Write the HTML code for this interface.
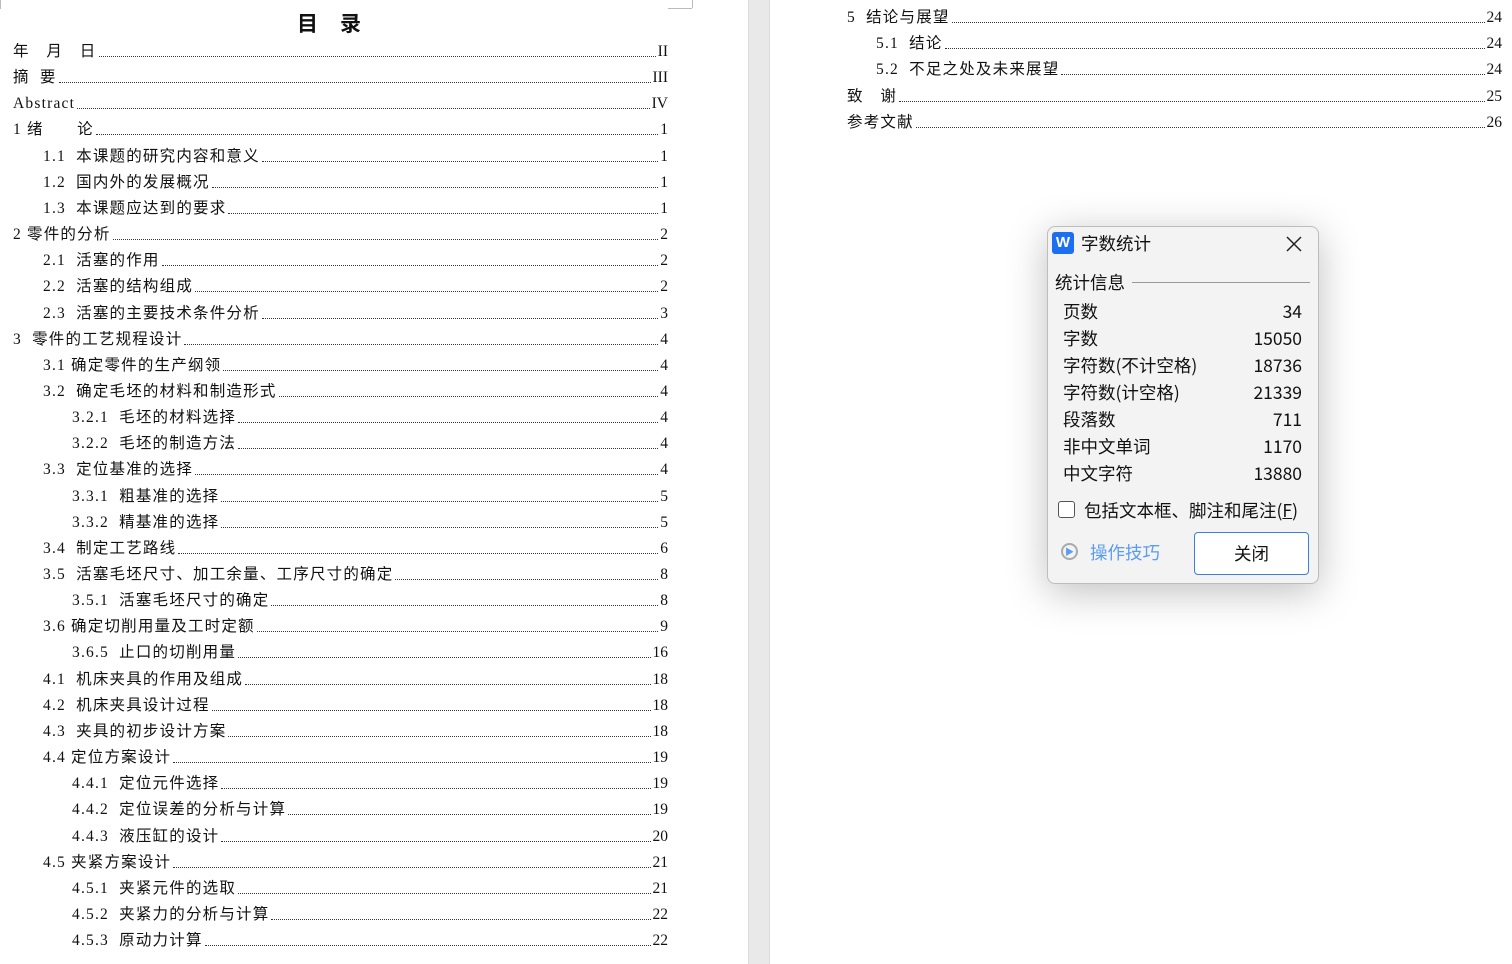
<!DOCTYPE html>
<html><head><meta charset="utf-8"><style>
body{margin:0;width:1512px;height:964px;position:relative;overflow:hidden;background:#fff;font-family:"Liberation Serif","Noto Sans CJK SC",serif;color:#111}
.gap{position:absolute;left:748px;top:0;width:20px;height:964px;background:#e9e9e9;border-left:1px solid #ddd;border-right:1px solid #ddd}
.r{position:absolute;height:20px;display:flex;align-items:flex-end;font-size:15.5px;line-height:20px;white-space:pre}
.r .a{letter-spacing:1.2px}
.r .d{flex:1;border-bottom:1px dotted #333;margin:0 2px 5px}
.t{position:absolute;left:0;width:680px;top:8px;text-align:center;font-size:21px;font-weight:bold;letter-spacing:22px;font-family:"Noto Sans CJK SC",sans-serif}
.mk{position:absolute;border-color:#bbb;border-style:solid;width:24px;height:8px}
.dlg{position:absolute;left:1047px;top:226px;width:270px;height:356px;background:#f3f3f3;border:1px solid #bdbdbd;border-radius:8px;box-shadow:0 8px 40px rgba(0,0,0,.25);font-family:"Noto Sans CJK SC",sans-serif;color:#111}
.dlg .row{position:absolute;left:15px;right:16px;display:flex;justify-content:space-between;font-size:17.5px;line-height:24px}
</style></head><body>
<div class="gap"></div>
<div class="mk" style="left:0;top:0;border-width:0 1px 1px 0;width:0"></div>
<div class="mk" style="left:668px;top:0;border-width:0 0 1px 0"></div>
<div class="mk" style="left:692px;top:0;border-width:0 0 0 1px;height:8px;width:0"></div>
<div class="t">目录</div>
<div id="L"></div>
<div class="dlg">
 <div style="position:absolute;left:4px;top:5px;width:22px;height:22px;background:#1d6ff2;border-radius:3px;color:#fff;font:bold 15px 'Liberation Sans',sans-serif;text-align:center;line-height:22px">W</div>
 <div style="position:absolute;left:33px;top:4px;font-size:17.5px">字数统计</div>
 <svg style="position:absolute;left:238px;top:9px" width="16" height="16" viewBox="0 0 16 16"><path d="M1 1L15 15M15 1L1 15" stroke="#222" stroke-width="1.5"/></svg>
 <div style="position:absolute;left:7px;top:43px;font-size:17.5px">统计信息</div>
 <div style="position:absolute;left:84px;right:8px;top:55px;border-top:1px solid #999"></div>
 <div class="row" style="top:73px"><span>页数</span><span>34</span></div>
 <div class="row" style="top:100px"><span>字数</span><span>15050</span></div>
 <div class="row" style="top:127px"><span>字符数(不计空格)</span><span>18736</span></div>
 <div class="row" style="top:154px"><span>字符数(计空格)</span><span>21339</span></div>
 <div class="row" style="top:181px"><span>段落数</span><span>711</span></div>
 <div class="row" style="top:208px"><span>非中文单词</span><span>1170</span></div>
 <div class="row" style="top:235px"><span>中文字符</span><span>13880</span></div>
 <div style="position:absolute;left:10px;top:274px;width:15px;height:15px;border:1px solid #555;border-radius:3px;background:#fff"></div>
 <div style="position:absolute;left:36px;top:271px;font-size:17.5px">包括文本框、脚注和尾注(<u>F</u>)</div>
 <div style="position:absolute;left:13px;top:316px;width:17px;height:17px;border:2px solid #aaa;border-radius:50%;box-sizing:border-box;color:#5a9cf0;font-size:9px;line-height:13px;text-align:center">▶</div>
 <div style="position:absolute;left:42px;top:313px;font-size:17.5px;color:#5a9cf0">操作技巧</div>
 <div style="position:absolute;left:146px;top:305px;width:115px;height:43px;background:#fff;border:1px solid #3a80d8;border-radius:4px;box-sizing:border-box;text-align:center;line-height:41px;font-size:17.5px">关闭</div>
</div>
<script>
var L=[["年　月　日","II",0],["摘  要","III",0],["Abstract","IV",0],["1 绪　　论","1",0],["1.1  本课题的研究内容和意义","1",1],["1.2  国内外的发展概况","1",1],["1.3  本课题应达到的要求","1",1],["2 零件的分析","2",0],["2.1  活塞的作用","2",1],["2.2  活塞的结构组成","2",1],["2.3  活塞的主要技术条件分析","3",1],["3  零件的工艺规程设计","4",0],["3.1 确定零件的生产纲领","4",1],["3.2  确定毛坯的材料和制造形式","4",1],["3.2.1  毛坯的材料选择","4",2],["3.2.2  毛坯的制造方法","4",2],["3.3  定位基准的选择","4",1],["3.3.1  粗基准的选择","5",2],["3.3.2  精基准的选择","5",2],["3.4  制定工艺路线","6",1],["3.5  活塞毛坯尺寸、加工余量、工序尺寸的确定","8",1],["3.5.1  活塞毛坯尺寸的确定","8",2],["3.6 确定切削用量及工时定额","9",1],["3.6.5  止口的切削用量","16",2],["4.1  机床夹具的作用及组成","18",1],["4.2  机床夹具设计过程","18",1],["4.3  夹具的初步设计方案","18",1],["4.4 定位方案设计","19",1],["4.4.1  定位元件选择","19",2],["4.4.2  定位误差的分析与计算","19",2],["4.4.3  液压缸的设计","20",2],["4.5 夹紧方案设计","21",1],["4.5.1  夹紧元件的选取","21",2],["4.5.2  夹紧力的分析与计算","22",2],["4.5.3  原动力计算","22",2]];
var R=[["5  结论与展望","24",0],["5.1  结论","24",1],["5.2  不足之处及未来展望","24",1],["致　谢","25",0],["参考文献","26",0]];
var h="",ind=[13,43,72];
L.forEach(function(e,i){var y=42+i*26.15;h+='<div class="r" style="top:'+y+'px;left:'+ind[e[2]]+'px;width:'+(668-ind[e[2]])+'px"><span class="a">'+e[0]+'</span><span class="d"></span><span>'+e[1]+'</span></div>';});
var ri=[847,876];
R.forEach(function(e,i){var y=8+i*26.2;h+='<div class="r" style="top:'+y+'px;left:'+ri[e[2]]+'px;width:'+(1502-ri[e[2]])+'px"><span class="a">'+e[0]+'</span><span class="d"></span><span>'+e[1]+'</span></div>';});
document.getElementById("L").innerHTML=h;
</script>
</body></html>
